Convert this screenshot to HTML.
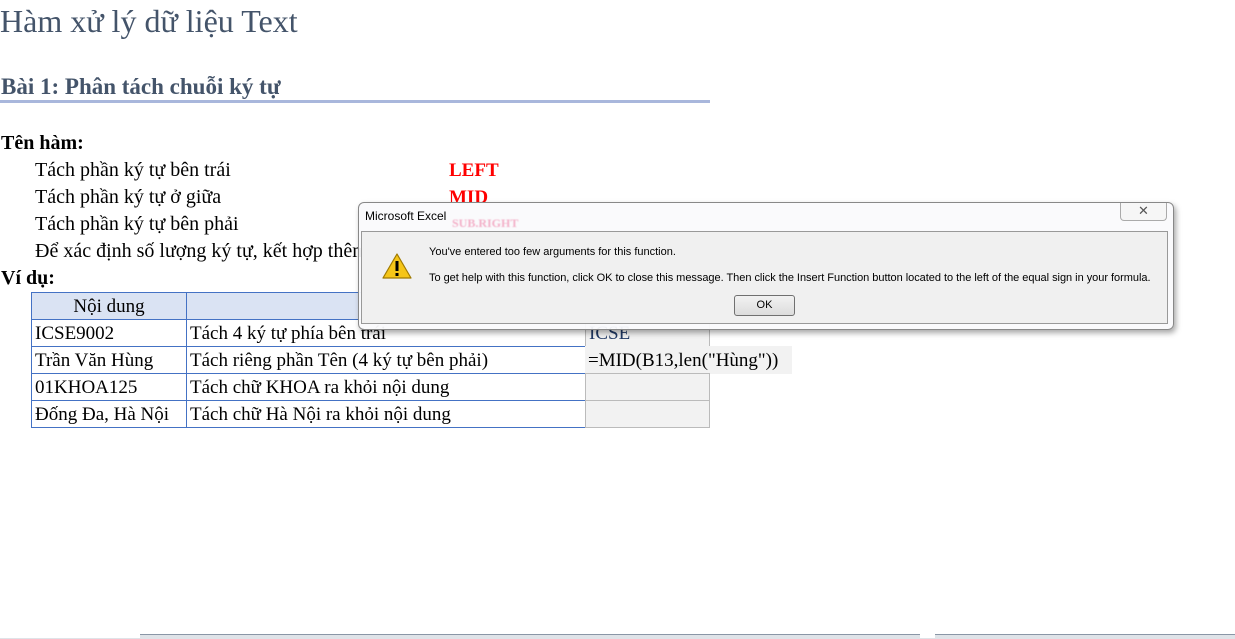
<!DOCTYPE html>
<html><head><meta charset="utf-8"><style>
body{margin:0;width:1235px;height:638px;background:#fff;position:relative;overflow:hidden;font-family:"Liberation Serif",serif}
.a{position:absolute;white-space:nowrap}
.t{font-size:20px;color:#000}
.cell{position:absolute;box-sizing:border-box;border:1px solid #4472c4;font-size:19px;padding-left:3px;padding-top:1px;line-height:25px}
.dlg{font-family:"Liberation Sans",sans-serif;font-size:11px;color:#000}
</style></head><body>
<div class="a" style="left:0;top:3px;font-size:32px;color:#44546a">Hàm xử lý dữ liệu Text</div>
<div class="a" style="left:1px;top:74px;font-size:23px;font-weight:bold;color:#44546a">Bài 1: Phân tách chuỗi ký tự</div>
<div class="a" style="left:0;top:100px;width:710px;height:3px;background:#a9b7dc"></div>
<div class="a t" style="left:1px;top:132px;font-weight:bold">Tên hàm:</div>
<div class="a t" style="left:35px;top:159px">Tách phần ký tự bên trái</div>
<div class="a t" style="left:35px;top:186px">Tách phần ký tự ở giữa</div>
<div class="a t" style="left:35px;top:213px">Tách phần ký tự bên phải</div>
<div class="a t" style="left:35px;top:240px">Để xác định số lượng ký tự, kết hợp thêm</div>
<div class="a t" style="left:449px;top:160px;color:#f00;font-weight:bold;font-size:19px">LEFT</div>
<div class="a t" style="left:449px;top:187px;color:#f00;font-weight:bold;font-size:19px">MID</div>
<div class="a t" style="left:1px;top:267px;font-weight:bold">Ví dụ:</div>

<div class="cell" style="left:31px;top:292px;width:156px;height:28px;background:#dae3f3;text-align:center;padding-left:0">Nội dung</div>
<div class="cell" style="left:186px;top:292px;width:400px;height:28px;background:#dae3f3"></div>
<div class="cell" style="left:31px;top:319px;width:156px;height:28px">ICSE9002</div>
<div class="cell" style="left:186px;top:319px;width:400px;height:28px">Tách 4 ký tự phía bên trái</div>
<div class="cell" style="left:585px;top:319px;width:125px;height:28px;background:#f2f2f2;border-color:#bbb;color:#1f3864">ICSE</div>
<div class="cell" style="left:31px;top:346px;width:156px;height:28px">Trần Văn Hùng</div>
<div class="cell" style="left:186px;top:346px;width:400px;height:28px">Tách riêng phần Tên (4 ký tự bên phải)</div>
<div class="cell" style="left:585px;top:346px;width:207px;height:28px;background:#f2f2f2;border:none;padding-left:3px;padding-top:2px">=MID(B13,len("Hùng"))</div>
<div class="cell" style="left:31px;top:373px;width:156px;height:28px">01KHOA125</div>
<div class="cell" style="left:186px;top:373px;width:400px;height:28px">Tách chữ KHOA ra khỏi nội dung</div>
<div class="cell" style="left:585px;top:373px;width:125px;height:28px;background:#f2f2f2;border-color:#bbb"></div>
<div class="cell" style="left:31px;top:400px;width:156px;height:28px">Đống Đa, Hà Nội</div>
<div class="cell" style="left:186px;top:400px;width:400px;height:28px">Tách chữ Hà Nội ra khỏi nội dung</div>
<div class="cell" style="left:585px;top:400px;width:125px;height:28px;background:#f2f2f2;border-color:#bbb"></div>

<!-- dialog -->
<div class="a" style="left:358px;top:202px;width:814px;height:126px;background:rgba(250,250,252,0.95);border:1px solid #888;border-radius:6px;box-shadow:2px 3px 6px rgba(0,0,0,0.35)"></div>
<div class="a" style="left:452px;top:216px;font:bold 12px 'Liberation Serif',serif;color:#f3b0c8;filter:blur(0.6px)">SUB.RIGHT</div>
<div class="a dlg" style="left:365px;top:209px;font-size:12px">Microsoft Excel</div>
<div class="a" style="left:1120px;top:203px;width:45px;height:17px;border:1px solid #aaa;border-top:none;border-radius:0 0 4px 4px;background:#f6f6f6;text-align:center;font:13px 'Liberation Sans',sans-serif;color:#555;line-height:16px">✕</div>
<div class="a" style="left:361px;top:231px;width:805px;height:91px;background:#f0f0f0;border:1px solid #999"></div>
<svg class="a" style="left:381px;top:252px" width="32" height="28" viewBox="0 0 32 28"><path d="M16 2 L30 26 L2 26 Z" fill="#f5c518" stroke="#a07a00" stroke-width="1.2" stroke-linejoin="round"/><rect x="14.5" y="9" width="3" height="10" fill="#000"/><rect x="14.5" y="21" width="3" height="3" fill="#000"/></svg>
<div class="a dlg" style="left:429px;top:246px">You've entered too few arguments for this function.</div>
<div class="a dlg" style="left:429px;top:272px;letter-spacing:-0.03px">To get help with this function, click OK to close this message. Then click the Insert Function button located to the left of the equal sign in your formula.</div>
<div class="a dlg" style="left:734px;top:295px;width:59px;height:19px;border:1px solid #707070;border-radius:3px;background:linear-gradient(#f2f2f2,#dcdcdc);text-align:center;line-height:19px">OK</div>

<!-- bottom tabs -->
<div class="a" style="left:0;top:634px;width:1235px;height:4px;background:#dfe3e8;border-top:1px solid #8a96a6"></div>
<div class="a" style="left:0;top:634px;width:140px;height:4px;background:#fff"></div>
<div class="a" style="left:920px;top:634px;width:15px;height:4px;background:#fff"></div>
</body></html>
